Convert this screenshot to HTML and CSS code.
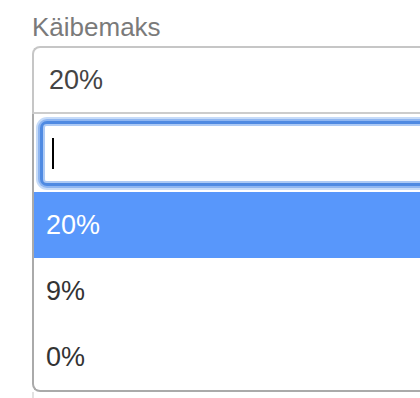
FILE: index.html
```html
<!DOCTYPE html>
<html lang="et">
<head>
<meta charset="utf-8">
<title>Käibemaks</title>
<link rel="stylesheet" href="styles.css">
</head>
<body>
<div class="field">
  <div class="label">Käibemaks</div>
  <div class="select">
    <span class="select-value">20%</span>
  </div>
  <div class="dropdown">
    <div class="search-wrap">
      <div class="search"><span class="caret"></span></div>
    </div>
    <ul class="options">
      <li class="option highlighted">20%</li>
      <li class="option">9%</li>
      <li class="option">0%</li>
    </ul>
  </div>
  <div class="under"></div>
</div>
</body>
</html>
```
FILE: styles.css
```css
html, body {
  margin: 0;
  padding: 0;
  background: #ffffff;
  overflow: hidden;
}
body {
  width: 420px;
  height: 398px;
  font-family: "Liberation Sans", Arial, Helvetica, sans-serif;
}
.field {
  box-sizing: border-box;
  width: 420px;
  padding-left: 32px;
  overflow: hidden;
}
.label {
  padding-top: 12px;
  height: 30px;
  line-height: 30px;
  margin-bottom: 4px;
  font-size: 26px;
  color: #7a7a7a;
}
.select {
  box-sizing: border-box;
  height: 68px;
  border: 2px solid #c6c6c6;
  border-right: none;
  border-bottom-color: #cccccc;
  border-radius: 8px 0 0 0;
  display: flex;
  align-items: center;
  padding-left: 15px;
}
.select-value {
  font-size: 27px;
  color: #444444;
  line-height: 32px;
}
.dropdown {
  box-sizing: border-box;
  border: 2px solid #aaaaaa;
  border-top: none;
  border-right: none;
  border-radius: 0 0 0 8px;
  background: #ffffff;
}
.search-wrap {
  padding: 7px 0 6px 6px;
}
.search {
  box-sizing: border-box;
  height: 65px;
  border: 3px solid #4f8ae2;
  border-right: none;
  border-radius: 7px 0 0 7px;
  box-shadow: inset 0 2px 0 #adcaf5, inset 2px 0 0 #adcaf5, inset 0 -2px 0 #adcaf5, 0 0 0 2px #8fb6f1, 0 0 0 4px #c6dbf8;
  background: #ffffff;
  display: flex;
  align-items: center;
  padding-left: 9px;
}
.caret {
  display: block;
  width: 2px;
  height: 31px;
  background: #000000;
}
.options {
  list-style: none;
  margin: 0;
  padding: 0;
}
.option {
  height: 66px;
  display: flex;
  align-items: center;
  padding-left: 12px;
  font-size: 27px;
  color: #333333;
}
.option.highlighted {
  background: #5897fb;
  color: #ffffff;
}
.under {
  height: 8px;
  border-left: 2px solid #e2e2e2;
}
```
